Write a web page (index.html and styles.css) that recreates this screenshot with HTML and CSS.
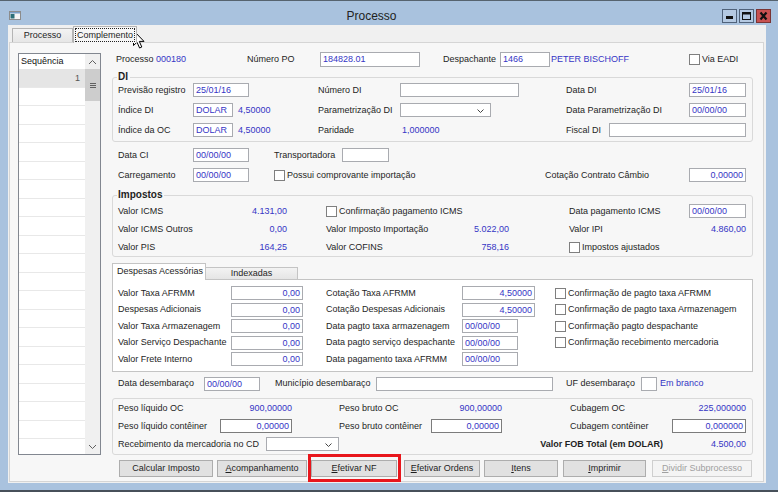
FILE: index.html
```html
<!DOCTYPE html>
<html lang="pt-BR">
<head>
<meta charset="utf-8">
<title>Processo</title>
<link rel="stylesheet" href="styles.css">
</head>
<body>
<div class="window">
  <div class="titlebar">
    <svg class="appicon" width="12" height="9" viewBox="0 0 12 9"><rect x="0.5" y="0.5" width="11" height="8" fill="#f4f4f4" stroke="#8c8c8c"/><rect x="1" y="1" width="10" height="1.5" fill="#7aa0c8"/><rect x="1.5" y="3" width="4" height="4.5" fill="#2c6f78"/></svg>
    <div class="title">Processo</div>
    <div class="wbtns">
      <span class="wbtn"><svg width="13" height="12" viewBox="0 0 13 12"><rect x="3" y="6" width="7" height="3" fill="#111"/></svg></span>
      <span class="wbtn"><svg width="13" height="12" viewBox="0 0 13 12"><rect x="2.5" y="2.5" width="8" height="7" fill="none" stroke="#111"/><rect x="2" y="2" width="9" height="2.5" fill="#111"/></svg></span>
      <span class="wbtn close"><svg width="13" height="12" viewBox="0 0 13 12"><path d="M3.5 2.5 L9.5 9.5 M9.5 2.5 L3.5 9.5" stroke="#111" stroke-width="2.2"/></svg></span>
    </div>
  </div>
  <div class="frame">
    <div class="client">
      <div class="tabstrip">
        <div class="tab">Processo</div>
        <div class="tab active"><span class="focus">Complemento</span></div>
      </div>
      <div class="panel">
        <div class="list">
          <div class="lcol">
            <div class="lhead">Sequência</div>
            <div class="lrow sel">1</div>
            <div class="lrow"></div><div class="lrow"></div><div class="lrow"></div><div class="lrow"></div>
            <div class="lrow"></div><div class="lrow"></div><div class="lrow"></div><div class="lrow"></div>
            <div class="lrow"></div><div class="lrow"></div><div class="lrow"></div><div class="lrow"></div>
            <div class="lrow"></div><div class="lrow"></div><div class="lrow"></div><div class="lrow"></div>
            <div class="lrow"></div><div class="lrow"></div><div class="lrow"></div><div class="lrow"></div>
          </div>
          <div class="sbar">
            <div class="sbtn"><svg width="9" height="6" viewBox="0 0 9 6"><polyline points="1,5 4.5,1.5 8,5" fill="none" stroke="#606060"/></svg></div>
            <div class="thumb"><svg width="6" height="5" viewBox="0 0 6 5"><path d="M0 0.5H6M0 2.5H6M0 4.5H6" stroke="#606060"/></svg></div>
            <div class="track"></div>
            <div class="sbtn"><svg width="9" height="6" viewBox="0 0 9 6"><polyline points="1,1 4.5,4.5 8,1" fill="none" stroke="#606060"/></svg></div>
          </div>
        </div>

        <div class="form">
          <div class="g rowA">
            <span>Processo <span class="v">000180</span></span>
            <span>Número PO</span>
            <span class="tb h15 w100">184828.01</span>
            <span>Despachante</span>
            <span class="tb h15 w50">1466</span>
            <span class="v">PETER BISCHOFF</span>
            <label class="chk"><span class="box"></span>Via EADI</label>
          </div>

          <div class="group gdi">
            <div class="gtitle">DI</div>
            <div class="g di">
              <span>Previsão registro</span>
              <span class="tb w56 s2">25/01/16</span>
              <span>Número DI</span>
              <span class="tb w119"></span>
              <span>Data DI</span>
              <span class="tb w57">25/01/16</span>
            </div>
            <div class="g di">
              <span>Índice DI</span>
              <span class="tb w40">DOLAR</span>
              <span class="v">4,50000</span>
              <span>Parametrização DI</span>
              <span class="tb sel w91"><svg class="chev" width="7" height="4" viewBox="0 0 7 4"><polyline points="0.5,0.5 3.5,3.5 6.5,0.5" fill="none" stroke="#444"/></svg></span>
              <span>Data Parametrização DI</span>
              <span class="tb w57">00/00/00</span>
            </div>
            <div class="g di">
              <span>Índice da OC</span>
              <span class="tb w40">DOLAR</span>
              <span class="v">4,50000</span>
              <span>Paridade</span>
              <span class="v pl2">1,000000</span>
              <span class="pair s2"><span class="lab43">Fiscal DI</span><span class="tb w137"></span></span>
            </div>
          </div>

          <div class="cis">
            <div class="g ci">
              <span>Data CI</span>
              <span class="tb w56">00/00/00</span>
              <span class="pair"><span class="lab68">Transportadora</span><span class="tb w47"></span></span>
            </div>
            <div class="g ci">
              <span>Carregamento</span>
              <span class="tb w56">00/00/00</span>
              <label class="chk"><span class="box"></span>Possui comprovante importação</label>
              <span>Cotação Contrato Câmbio</span>
              <span class="tb r w57">0,00000</span>
            </div>
          </div>

          <div class="group gimp">
            <div class="gtitle">Impostos</div>
            <div class="g imp">
              <span>Valor ICMS</span>
              <span class="v n1">4.131,00</span>
              <label class="chk s2"><span class="box"></span>Confirmação pagamento ICMS</label>
              <span>Data pagamento ICMS</span>
              <span class="tb w57">00/00/00</span>
            </div>
            <div class="g imp">
              <span>Valor ICMS Outros</span>
              <span class="v n1">0,00</span>
              <span>Valor Imposto Importação</span>
              <span class="v n2">5.022,00</span>
              <span>Valor IPI</span>
              <span class="v ra">4.860,00</span>
            </div>
            <div class="g imp">
              <span>Valor PIS</span>
              <span class="v n1">164,25</span>
              <span>Valor COFINS</span>
              <span class="v n2">758,16</span>
              <label class="chk s2"><span class="box"></span>Impostos ajustados</label>
            </div>
          </div>

          <div class="itabs">
            <div class="itab active">Despesas Acessórias</div>
            <div class="itab">Indexadas</div>
          </div>
          <div class="tpanel">
            <div class="g tr">
              <span>Valor Taxa AFRMM</span>
              <span class="tb r w72">0,00</span>
              <span>Cotação Taxa AFRMM</span>
              <span class="tb r w73">4,50000</span>
              <label class="chk"><span class="box"></span>Confirmação de pagto taxa AFRMM</label>
            </div>
            <div class="g tr">
              <span>Despesas Adicionais</span>
              <span class="tb r w72">0,00</span>
              <span>Cotação Despesas Adicionais</span>
              <span class="tb r w73">4,50000</span>
              <label class="chk"><span class="box"></span>Confirmação de pagto taxa Armazenagem</label>
            </div>
            <div class="g tr">
              <span>Valor Taxa Armazenagem</span>
              <span class="tb r w72">0,00</span>
              <span>Data pagto taxa armazenagem</span>
              <span class="tb w56">00/00/00</span>
              <label class="chk"><span class="box"></span>Confirmação pagto despachante</label>
            </div>
            <div class="g tr">
              <span>Valor Serviço Despachante</span>
              <span class="tb r w72">0,00</span>
              <span>Data pagto serviço despachante</span>
              <span class="tb w56">00/00/00</span>
              <label class="chk"><span class="box"></span>Confirmação recebimento mercadoria</label>
            </div>
            <div class="g tr">
              <span>Valor Frete Interno</span>
              <span class="tb r w72">0,00</span>
              <span>Data pagamento taxa AFRMM</span>
              <span class="tb w56">00/00/00</span>
            </div>
          </div>

          <div class="g dd">
            <span>Data desembaraço</span>
            <span class="tb w56">00/00/00</span>
            <span>Município desembaraço</span>
            <span class="tb w177"></span>
            <span>UF desembaraço</span>
            <span class="tb w16"></span>
            <span class="v">Em branco</span>
          </div>

          <div class="group gpeso">
            <div class="g pr">
              <span>Peso líquido OC</span>
              <span class="v n3">900,00000</span>
              <span>Peso bruto OC</span>
              <span class="v n4">900,00000</span>
              <span>Cubagem OC</span>
              <span class="v ra">225,000000</span>
            </div>
            <div class="g pr">
              <span>Peso líquido contêiner</span>
              <span class="tb dk r w72">0,00000</span>
              <span>Peso bruto contêiner</span>
              <span class="tb dk r w71">0,00000</span>
              <span>Cubagem contêiner</span>
              <span class="tb dk r w74">0,000000</span>
            </div>
            <div class="g pr">
              <span class="pair s2"><span class="lab148">Recebimento da mercadoria no CD</span><span class="tb sel w78"><svg class="chev" width="7" height="4" viewBox="0 0 7 4"><polyline points="0.5,0.5 3.5,3.5 6.5,0.5" fill="none" stroke="#444"/></svg></span></span>
              <span class="fob s3">Valor FOB Total (em DOLAR)</span>
              <span class="v ra">4.500,00</span>
            </div>
          </div>

          <div class="btns">
            <span class="btn">Calcular Imposto</span>
            <span class="btn"><u>A</u>companhamento</span>
            <span class="btn hl"><u>E</u>fetivar NF</span>
            <span class="btn"><u>E</u>fetivar Ordens</span>
            <span class="btn"><u>I</u>tens</span>
            <span class="btn"><u>I</u>mprimir</span>
            <span class="btn off"><u>D</u>ividir Subprocesso</span>
          </div>
        </div>
      </div>
    </div>
  </div>
  <svg class="cursor" width="12" height="19" viewBox="0 0 12 19"><path d="M0.5 0.5 L0.5 15.5 L4 12.2 L6.6 18 L8.8 17 L6.3 11.4 L11 11.4 Z" fill="#fff" stroke="#000" stroke-linejoin="round"/></svg>
</div>
</body>
</html>
```

FILE: styles.css
```css
* { box-sizing: border-box; margin: 0; padding: 0; }
html, body { width: 778px; height: 492px; overflow: hidden; background: #a9c2de; }
body { font-family: "Liberation Sans", Arial, sans-serif; font-size: 9px; line-height: 11px; color: #1e1e1e; }

.window { position: relative; width: 778px; height: 492px; background: #a9c2de; border-top: 1px solid #56636f; border-bottom: 2px solid #47505a; display: flex; flex-direction: column; }
.titlebar { flex: none; height: 24px; display: flex; align-items: flex-start; }
.appicon { margin: 10px 0 0 9px; }
.title { flex: 1; text-align: center; font-size: 12px; line-height: 14px; margin-top: 8px; color: #222; }
.wbtns { display: flex; gap: 2px; margin: 8px 7px 0 0; }
.wbtn { width: 15px; height: 14px; border: 1px solid #50627a; background: #b4c9e2; display: flex; }
.wbtn.close { background: #c85151; border-color: #7a3434; }

.frame { flex: 1; display: flex; padding: 0 12px 7px 8px; }
.client { flex: 1; background: #f0f0f0; display: flex; flex-direction: column; }
.tabstrip { position: relative; z-index: 1; flex: none; height: 17px; display: flex; align-items: flex-end; padding-left: 4px; }
.tab { width: 61px; height: 14px; border: 1px solid #b5b5b5; border-bottom: none; background: linear-gradient(#f3f3f3, #e6e6e6); text-align: center; line-height: 13px; }
.tab.active { width: 64px; height: 17px; margin-bottom: -1px; background: #f7f7f7; padding: 1px 1px 0; }
.focus { display: block; border: 1px dotted #222; height: 14px; line-height: 12px; }

.panel { flex: none; margin-left: 1px; width: 755px; height: 440px; border: 1px solid #d5d5d5; background: #f7f7f7; display: flex; padding: 9px 9px 4px 8px; }

.list { flex: none; width: 83px; height: 402px; margin-top: 1px; border: 1px solid #828790; background: #fff; display: flex; overflow: hidden; }
.lcol { flex: 1; overflow: hidden; }
.lhead { height: 15px; line-height: 15px; padding-left: 2px; color: #111; }
.lrow { height: 18.5px; border-bottom: 1px solid #e8e8e8; text-align: right; padding-right: 5px; line-height: 18px; color: #555; }
.lrow.sel { background: #e5e5e5; }
.sbar { flex: none; width: 15px; background: #f0f0f0; display: flex; flex-direction: column; }
.sbtn { height: 15px; display: flex; align-items: center; justify-content: center; background: #f0f0f0; }
.thumb { height: 32px; background: #cdcdcd; display: flex; align-items: center; justify-content: center; }
.track { flex: 1; }

.form { flex: none; width: 641px; margin-left: 11px; display: flex; flex-direction: column; }
.g { display: grid; align-items: center; white-space: nowrap; }
.s2 { grid-column: span 2; }
.s3 { grid-column: span 3; }
.v { color: #3535c5; }
.ra { text-align: right; }
.pl2 { padding-left: 2px; }
.pair { display: flex; align-items: center; }
.lab43 { width: 43px; flex: none; }
.lab68 { width: 68px; flex: none; }
.lab148 { width: 148px; flex: none; }

.tb { display: block; height: 14px; border: 1px solid #a9abb0; background: #fff; color: #3535c5; padding: 0 0 0 2px; line-height: 12px; overflow: hidden; white-space: nowrap; }
.tb.r { text-align: right; padding: 0 2px 0 0; }
.tb.h15 { height: 15px; line-height: 13px; }
.tb.dk { border-color: #7c7c7c; }
.sel { position: relative; }
.chev { position: absolute; right: 6px; top: 5px; }
.w16 { width: 16px; } .w40 { width: 40px; } .w47 { width: 47px; } .w50 { width: 50px; }
.w56 { width: 56px; } .w57 { width: 57px; } .w71 { width: 71px; } .w72 { width: 72px; }
.w73 { width: 73px; } .w74 { width: 74px; } .w78 { width: 78px; } .w91 { width: 91px; }
.w100 { width: 100px; } .w119 { width: 119px; } .w137 { width: 137px; } .w177 { width: 177px; }

.chk { display: flex; align-items: center; }
.box { flex: none; width: 11px; height: 11px; border: 1px solid #7f7f7f; background: #fff; margin-right: 2px; }

.rowA { grid-template-columns: 131px 73px 123px 57px 51px 138px auto; height: 15px; padding-left: 4px; }

.group { border: 1px solid #d9d9d9; border-radius: 3px; padding: 0 6px 1px 5px; }
.gtitle { font-weight: bold; font-size: 10px; height: 10px; line-height: 10px; margin: -6px 0 0 -1px; padding: 0 2px 0 1px; width: max-content; background: #f7f7f7; color: #1e1e1e; }
.gdi { margin-top: 10px; }
.gdi .gtitle { margin-bottom: -2px; }
.di { grid-template-columns: 75px 45px 80px 82px 166px 123px 57px; height: 20px; }

.cis { margin-top: 3px; padding-left: 6px; }
.ci { grid-template-columns: 75px 81px 271px 144px 57px; height: 20px; }

.gimp { margin-top: 10px; padding-bottom: 0; }
.gimp .gtitle { margin-bottom: 2px; }
.imp { grid-template-columns: 112px 96px 129px 114px 120px 57px; height: 18px; }
.n1 { text-align: right; padding-right: 39px; }
.n2 { text-align: right; padding-right: 60px; }

.itabs { position: relative; z-index: 1; display: flex; align-items: flex-end; height: 16px; margin-top: 6px; }
.itab { width: 92px; height: 12px; border: 1px solid #c4c4c4; border-bottom: none; border-left: none; background: linear-gradient(#f3f3f3, #e5e5e5); text-align: center; line-height: 11px; }
.itab.active { width: 94px; height: 17px; margin-bottom: -1px; border-left: 1px solid #c4c4c4; background: #fff; text-align: left; padding: 2px 0 0 4px; }
.tpanel { border: 1px solid #c4c4c4; background: #fff; padding: 5px 0 3.5px 5px; }
.tr { grid-template-columns: 113px 95px 136px 93px auto; height: 16.5px; }

.dd { grid-template-columns: 86px 71px 101px 190px 75px 19px auto; height: 15px; margin-top: 4px; padding-left: 6px; }

.gpeso { margin-top: 7px; }
.pr { grid-template-columns: 102px 119px 92px 139px 102px 74px; height: 18px; }
.n3 { text-align: right; padding-right: 47px; }
.n4 { text-align: right; padding-right: 68px; }
.fob { font-weight: bold; text-align: right; padding-right: 9px; }

.btns { display: grid; grid-template-columns: 98px 94px 93px 80px 79px 89px 100px; height: 17px; margin-top: 5px; padding-left: 7px; }
.btn { position: relative; display: flex; align-items: center; justify-content: center; height: 17px; border: 1px solid #adadad; background: #e1e1e1; color: #1e1e1e; }
.btn:nth-child(1) { width: 94px; }
.btn:nth-child(2) { width: 90px; }
.btn:nth-child(3) { width: 86px; }
.btn:nth-child(4) { width: 76px; }
.btn:nth-child(5) { width: 74px; }
.btn:nth-child(6) { width: 83px; }
.btn:nth-child(7) { width: 100px; }
.btn.off { background: #f4f4f4; border-color: #cfcfcf; color: #a0a0a0; }
.btn.hl::after { content: ""; position: absolute; left: -4px; right: -5px; top: -7px; bottom: -6px; border: 3px solid #e8161c; }

.cursor { position: absolute; left: 133px; top: 29px; }
```
